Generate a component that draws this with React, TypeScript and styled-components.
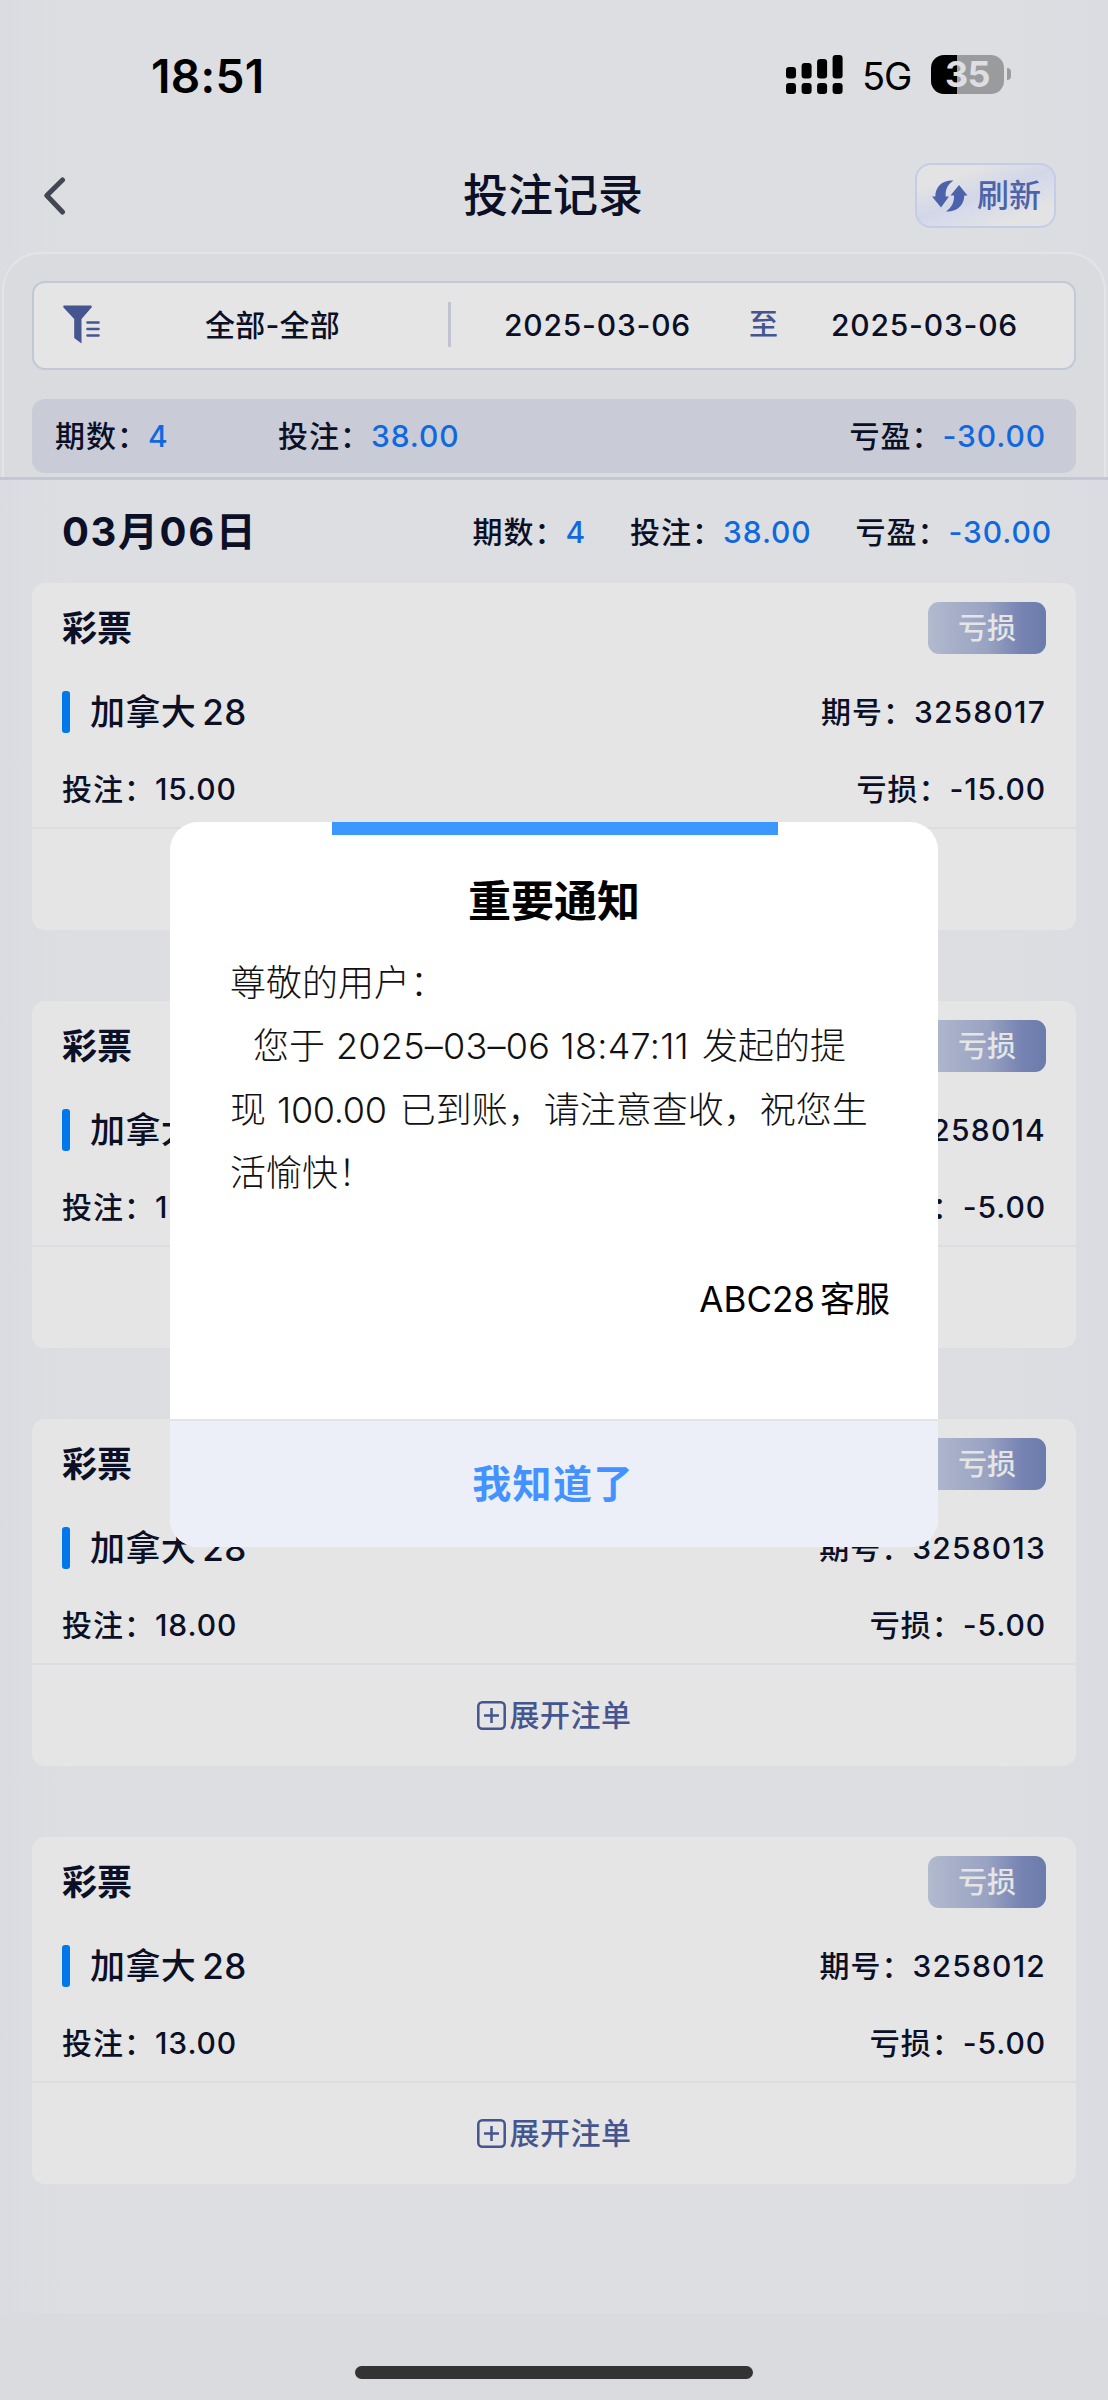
import React from 'react';
import styled, { createGlobalStyle } from 'styled-components';

const ink = '#0b1027';
const indigo = '#44558f';
const blue = '#0f68e0';

const GlobalStyle = createGlobalStyle`
  *, *::before, *::after { box-sizing: border-box; }
  body {
    margin: 0;
    background: #dcdde1;
    font-family: Inter, "Noto Sans CJK SC", "Liberation Sans", sans-serif;
    color: ${ink};
    font-feature-settings: "calt" 0;
  }
`;

const Screen = styled.div`
  position: relative;
  width: 1108px;
  height: 2400px;
  overflow: hidden;
  display: flex;
  flex-direction: column;
  white-space: nowrap;
  background: linear-gradient(90deg, #dadce1 0, #dddee1 70px, #dddee1 1000px, #dbdce1 100%);
`;

const StatusBar = styled.div`
  height: 150px;
  padding: 0 97px 0 151px;
  display: flex;
  justify-content: space-between;
  color: #000;
`;

const Clock = styled.div`
  margin-top: 49px;
  height: 54px;
  line-height: 54px;
  font-size: 46px;
  font-weight: 600;
  letter-spacing: 0.3px;
`;

const StatusIcons = styled.div`
  display: flex;
  margin-top: 55px;
  height: 39px;
`;

const Network = styled.div`
  margin-left: 19px;
  width: 69px;
  font-size: 38px;
  line-height: 43px;
  letter-spacing: -1px;
`;

const Battery = styled.div`
  width: 73px;
  height: 39px;
  border-radius: 13px;
  background: linear-gradient(90deg, #000 26px, #9a9b9d 26px);
  color: #dddee1;
  font-size: 36px;
  font-weight: 700;
  line-height: 39px;
  text-align: center;
  letter-spacing: -0.5px;
`;

const BatteryTip = styled.div`
  width: 4px;
  height: 12px;
  margin: 13px 0 0 3px;
  border-radius: 0 4px 4px 0;
  background: #9a9b9d;
`;

const NavBar = styled.div`
  height: 102px;
  padding: 0 52px 0 44px;
  display: grid;
  grid-template-columns: 141px 1fr 141px;
  align-items: start;
`;

const BackButton = styled.div`
  padding-top: 26px;
  height: 70px;
`;

const PageTitle = styled.div`
  margin-left: 6px;
  text-align: center;
  font-size: 45px;
  line-height: 91px;
  font-weight: 500;
`;

const RefreshButton = styled.div`
  margin-top: 13px;
  width: 141px;
  height: 65px;
  border: 2px solid #c4cde8;
  border-radius: 16px;
  background: linear-gradient(160deg, #e3e3e4 22%, #d2d7e8 48%, #d6daea 56%, #e3e3e4 80%);
  display: flex;
  align-items: center;
  padding-left: 15px;
  gap: 9px;
  font-size: 32px;
  line-height: 60px;
  font-weight: 500;
  color: #4c63a8;
`;

const FilterPanel = styled.div`
  height: 225px;
  margin: 0 2px;
  padding: 27px 28px 0;
  border: 2px solid #e3e4e5;
  border-bottom: 0;
  border-radius: 38px 38px 0 0;
  background: #dadbde;
`;

const FilterBox = styled.div`
  height: 89px;
  padding-bottom: 2px;
  border: 2px solid #c1c8d6;
  border-radius: 13px;
  background: #e5e5e5;
  display: grid;
  grid-template-columns: 414px 3px 298px 42px 1fr;
  align-items: center;
  font-size: 30px;
  line-height: 60px;
  letter-spacing: 0.8px;
`;

const CategoryFilter = styled.div`
  display: flex;
  align-items: center;
  padding-left: 29px;
`;

const CategoryText = styled.span`
  margin-left: 105px;
  font-weight: 500;
  letter-spacing: 0.2px;
`;

const FilterDivider = styled.div`
  height: 45px;
  background: #c1c3d3;
`;

const DateText = styled.div<{ $left: number }>`
  padding-left: ${(p) => p.$left}px;
  font-weight: 500;
`;

const DateTo = styled.div`
  color: ${indigo};
  font-size: 29px;
  font-weight: 500;
  letter-spacing: 0;
`;

const SummaryBar = styled.div`
  margin-top: 29px;
  height: 74px;
  padding: 0 30px 0 23px;
  border-radius: 13px;
  background: #c9cbd7;
  display: grid;
  grid-template-columns: 223px 1fr auto;
  align-items: center;
`;

const StatText = styled.div`
  font-size: 30px;
  line-height: 60px;
  letter-spacing: 1px;
  font-weight: 500;
`;

const Amount = styled.span<{ $accent?: boolean; $space: number }>`
  letter-spacing: ${(p) => p.$space}px;
  color: ${(p) => (p.$accent ? blue : 'inherit')};
`;

const DayHeader = styled.div`
  height: 106px;
  border-top: 3px solid #c1c8d5;
  padding: 0 56px 0 62px;
  display: flex;
  align-items: center;
  justify-content: space-between;
`;

const DayTitle = styled.div`
  font-size: 40px;
  line-height: 80px;
  font-weight: 700;
  letter-spacing: 1.6px;
`;

const DayStats = styled.div`
  display: flex;
  gap: 44px;
`;

const CardList = styled.div`
  padding: 0 32px;
  display: flex;
  flex-direction: column;
  gap: 71px;
`;

const Card = styled.div`
  height: 347px;
  border-radius: 13px;
  background: #e5e5e5;
`;

const CardBody = styled.div`
  height: 246px;
  border-bottom: 2px solid #dcdde1;
  padding: 19px 30px 0 30px;
`;

const CardRow = styled.div<{ $height: number }>`
  height: ${(p) => p.$height}px;
  display: flex;
  align-items: center;
  justify-content: space-between;
`;

const CardKind = styled.div`
  font-size: 35px;
  line-height: 52px;
  font-weight: 700;
`;

const Badge = styled.div`
  width: 118px;
  height: 52px;
  border-radius: 11px;
  background: linear-gradient(90deg, #b2bace, #99a3c2 50%, #7884b3 78%, #6a7cac);
  color: #e5e5e5;
  font-size: 29px;
  font-weight: 500;
  line-height: 53px;
  text-align: center;
`;

const GameName = styled.div`
  display: flex;
  align-items: center;
  gap: 20px;
  font-size: 35px;
  line-height: 60px;
  font-weight: 500;
  letter-spacing: 0.4px;

  &::before {
    content: "";
    width: 8px;
    height: 42px;
    border-radius: 3px;
    background: #0078ea;
  }
`;

const GameNo = styled.span`
  margin-left: 6px;
`;

const ExpandButton = styled.div`
  height: 101px;
  padding-bottom: 1px;
  display: flex;
  align-items: center;
  justify-content: center;
  gap: 4px;
  color: ${indigo};
  font-size: 30px;
  line-height: 60px;
  font-weight: 500;
  letter-spacing: 0.5px;
`;

const HomeArea = styled.div`
  margin-top: auto;
  height: 87px;
  padding-top: 53px;
  background: #dadbdf;
  display: flex;
  justify-content: center;
`;

const HomeIndicator = styled.div`
  width: 398px;
  height: 13px;
  border-radius: 7px;
  background: #333;
`;

const Dialog = styled.div`
  position: absolute;
  left: 170px;
  top: 822px;
  width: 768px;
  height: 725px;
  border-radius: 28px;
  overflow: hidden;
  background: #fff;
  color: #000;
  display: flex;
  flex-direction: column;
`;

const DialogAccent = styled.div`
  width: 446px;
  height: 13px;
  margin: 0 auto 0 161.5px;
  background: #3b98ff;
`;

const DialogTitle = styled.div`
  margin-top: 36px;
  text-align: center;
  font-size: 43px;
  line-height: 60px;
  font-weight: 700;
`;

const DialogText = styled.div`
  padding: 21px 0 0 60px;
  font-size: 36px;
  line-height: 63.4px;
  font-weight: 300;
  color: #111;
`;

const Line = styled.div<{ $indent?: number }>`
  padding-left: ${(p) => p.$indent ?? 0}px;
`;

const Latin = styled.span<{ $space: number }>`
  margin: 0 13px 0 11px;
  letter-spacing: ${(p) => p.$space}px;
`;

const Signature = styled.div`
  margin-top: 61px;
  padding-right: 48px;
  text-align: right;
  font-size: 35px;
  line-height: 64px;
`;

const SignatureTeam = styled.span`
  margin-left: 5px;
`;

const ConfirmButton = styled.div`
  margin-top: auto;
  height: 128px;
  padding-right: 2px;
  border-top: 2px solid #e3e4e6;
  background: #eceff8;
  color: #4492ff;
  text-align: center;
  font-size: 39px;
  line-height: 126px;
  font-weight: 700;
  letter-spacing: 1.4px;
`;

const SignalIcon = () => (
  <svg width="57" height="39" viewBox="0 0 57 39">
    {[0, 15.6, 31.1, 46.6].map((x, i) => (
      <g key={x}>
        <rect x={x} y={12 - i * 4} width="10" height={11.5 + i * 4} rx="3.2" />
        <rect x={x} y="28" width="10" height="11" rx="3.2" />
      </g>
    ))}
  </svg>
);

const BackIcon = () => (
  <svg width="22" height="40" viewBox="0 0 22 40">
    <path d="M18.5 4 2.8 19.5 18.5 36" fill="none" stroke="#414752" strokeWidth="5" strokeLinecap="round" strokeLinejoin="round" />
  </svg>
);

const RefreshIcon = () => (
  <svg width="36" height="32" viewBox="0 0 36 32">
    <path fill="#4c63ab" d="M21.5.6C10.5-.2 3.5 6.5 3.3 16.5H0L9 27.5 17 16.5H13.7C13.2 10 15.5 4.5 21.5.6Z" />
    <path fill="#4c63ab" d="M14 31.4C25 32 32 25.5 32.3 15.5H35.5L27 5 18.5 15.5H22C22.3 22 20 27.5 14 31.4Z" />
  </svg>
);

const FilterIcon = () => (
  <svg width="37" height="39" viewBox="0 0 37 39">
    <path fill={indigo} d="M1.5.5H27.5Q29.5.5 28.5 2.5L18.5 14V38.5L11.2 33V14L.5 2.5Q-.5.5 1.5.5Z" />
    <path d="M24.5 17.5H35.5M24.5 24H35.5M24.5 30.5H35.5" stroke={indigo} strokeWidth="2.6" strokeLinecap="round" />
  </svg>
);

const ExpandIcon = () => (
  <svg width="29" height="29" viewBox="0 0 29 29">
    <rect x="1.3" y="1.3" width="26.4" height="26.4" rx="4" fill="none" stroke={indigo} strokeWidth="2.5" />
    <path d="M14.5 7V22M7 14.5H22" stroke={indigo} strokeWidth="2.5" />
  </svg>
);

type StatProps = { label: string; value: string; accent?: boolean; space?: number };

const Stat = ({ label, value, accent, space = 0.9 }: StatProps) => (
  <StatText>
    {label}：
    <Amount $accent={accent} $space={space}>
      {value}
    </Amount>
  </StatText>
);

const bets = [
  { issue: '3258017', stake: '15.00', loss: '-15.00' },
  { issue: '3258014', stake: '15.00', loss: '-5.00' },
  { issue: '3258013', stake: '18.00', loss: '-5.00' },
  { issue: '3258012', stake: '13.00', loss: '-5.00' },
];

export default function App() {
  return (
    <>
      <GlobalStyle />
      <Screen lang="zh-CN">
        <StatusBar>
          <Clock>18:51</Clock>
          <StatusIcons>
            <SignalIcon />
            <Network>5G</Network>
            <Battery>35</Battery>
            <BatteryTip />
          </StatusIcons>
        </StatusBar>
        <NavBar>
          <BackButton>
            <BackIcon />
          </BackButton>
          <PageTitle>投注记录</PageTitle>
          <RefreshButton>
            <RefreshIcon />
            刷新
          </RefreshButton>
        </NavBar>
        <FilterPanel>
          <FilterBox>
            <CategoryFilter>
              <FilterIcon />
              <CategoryText>全部-全部</CategoryText>
            </CategoryFilter>
            <FilterDivider />
            <DateText $left={53}>2025-03-06</DateText>
            <DateTo>至</DateTo>
            <DateText $left={40}>2025-03-06</DateText>
          </FilterBox>
          <SummaryBar>
            <Stat label="期数" value="4" accent />
            <Stat label="投注" value="38.00" accent />
            <Stat label="亏盈" value="-30.00" accent />
          </SummaryBar>
        </FilterPanel>
        <DayHeader>
          <DayTitle>03月06日</DayTitle>
          <DayStats>
            <Stat label="期数" value="4" accent />
            <Stat label="投注" value="38.00" accent />
            <Stat label="亏盈" value="-30.00" accent />
          </DayStats>
        </DayHeader>
        <CardList>
          {bets.map((bet) => (
            <Card key={bet.issue}>
              <CardBody>
                <CardRow $height={52}>
                  <CardKind>彩票</CardKind>
                  <Badge>亏损</Badge>
                </CardRow>
                <CardRow $height={116}>
                  <GameName>
                    <span>
                      加拿大<GameNo>28</GameNo>
                    </span>
                  </GameName>
                  <Stat label="期号" value={bet.issue} space={1.2} />
                </CardRow>
                <CardRow $height={38}>
                  <Stat label="投注" value={bet.stake} />
                  <Stat label="亏损" value={bet.loss} />
                </CardRow>
              </CardBody>
              <ExpandButton>
                <ExpandIcon />
                展开注单
              </ExpandButton>
            </Card>
          ))}
        </CardList>
        <HomeArea>
          <HomeIndicator />
        </HomeArea>
        <Dialog>
          <DialogAccent />
          <DialogTitle>重要通知</DialogTitle>
          <DialogText>
            <Line>尊敬的用户：</Line>
            <Line $indent={23}>
              您于<Latin $space={0.25}>2025–03–06 18:47:11</Latin>发起的提
            </Line>
            <Line>
              现<Latin $space={-0.3}>100.00</Latin>已到账，请注意查收，祝您生
            </Line>
            <Line>活愉快！</Line>
          </DialogText>
          <Signature>
            ABC28<SignatureTeam>客服</SignatureTeam>
          </Signature>
          <ConfirmButton>我知道了</ConfirmButton>
        </Dialog>
      </Screen>
    </>
  );
}
